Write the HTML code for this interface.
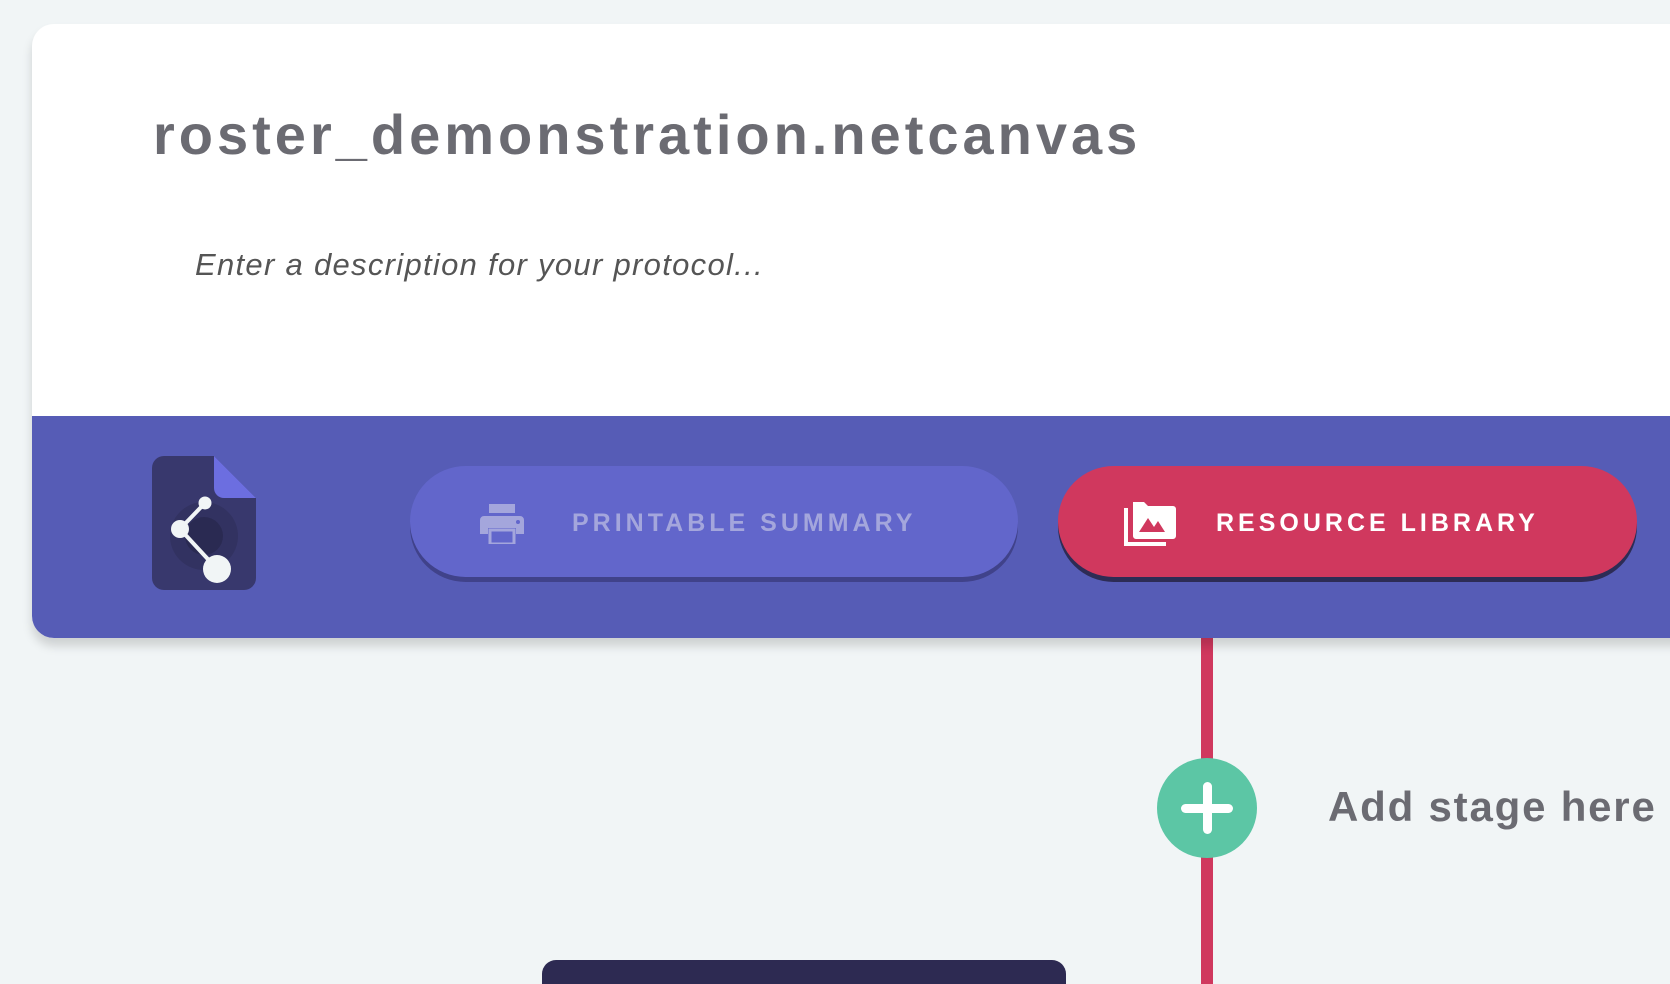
<!DOCTYPE html>
<html><head><style>
*{margin:0;padding:0;box-sizing:border-box}
html,body{width:1670px;height:984px;overflow:hidden}
body{background:#f1f5f6;font-family:"Liberation Sans",sans-serif;position:relative}
.line{position:absolute;left:1201px;top:600px;width:12px;height:384px;background:#d0385e}
.card{position:absolute;left:32px;top:24px;width:1700px;height:614px;border-radius:22px;overflow:hidden;background:#fff;box-shadow:0 8px 10px rgba(0,0,0,.15)}
.title{position:absolute;left:121px;top:78px;font-size:56px;font-weight:bold;color:#6b6b72;letter-spacing:4px}
.desc{position:absolute;left:163px;top:223px;font-size:31px;font-style:italic;color:#555;letter-spacing:1.3px}
.bar{position:absolute;left:0;top:392px;width:100%;height:222px;background:#565cb6}
.btn{position:absolute;height:111px;border-radius:56px;display:flex;align-items:center;font-weight:bold;font-size:25px;letter-spacing:4px;padding-top:4px}
.b1{left:378px;top:50px;width:608px;background:#6266cb;color:#a4a6dc;box-shadow:0 5px 0 #40428a}
.b2{left:1026px;top:50px;width:579px;background:#d0385e;color:#fff;box-shadow:0 5px 0 #2d2c55}
.plus{position:absolute;left:1157px;top:758px;width:100px;height:100px;border-radius:50%;background:#5cc6a5}
.add{position:absolute;left:1328px;top:783px;font-size:42px;font-weight:bold;color:#6b6b72;letter-spacing:1.8px}
.dark{position:absolute;left:542px;top:960px;width:524px;height:60px;border-radius:14px;background:#2d2a52}
</style></head><body>
<div class="line"></div>
<div class="card">
<div class="title">roster_demonstration.netcanvas</div>
<div class="desc">Enter a description for your protocol...</div>
<div class="bar">
<svg style="position:absolute;left:120px;top:40px" width="104" height="134" viewBox="0 0 104 134">
<path d="M12 0H62L104 42V122A12 12 0 0 1 92 134H12A12 12 0 0 1 0 122V12A12 12 0 0 1 12 0Z" fill="#38386d"/>
<path d="M62 0L104 42H72A10 10 0 0 1 62 32Z" fill="#6c6ee0"/>
<circle cx="52" cy="80" r="34" fill="#323261"/>
<circle cx="52" cy="80" r="19" fill="#2a2a52"/>
<path d="M53 47L28 73L65 113" stroke="#f1f5f6" stroke-width="4" fill="none"/>
<circle cx="53" cy="47" r="6.5" fill="#f1f5f6"/>
<circle cx="28" cy="73" r="9" fill="#f1f5f6"/>
<circle cx="65" cy="113" r="14" fill="#f1f5f6"/>
</svg>
<div class="btn b1"><svg style="margin-left:70px;margin-right:48px" width="44" height="40" viewBox="0 0 44 40"><rect x="9" y="0" width="26" height="9" fill="#a4a6dc"/><path d="M4 12H40A4 4 0 0 1 44 16V30H36V24H8V30H0V16A4 4 0 0 1 4 12Z" fill="#a4a6dc"/><rect x="10" y="26" width="24" height="14" fill="none" stroke="#a4a6dc" stroke-width="3"/><circle cx="38" cy="18" r="2" fill="#6266cb"/></svg>PRINTABLE SUMMARY</div>
<div class="btn b2"><svg style="margin-left:66px;margin-right:40px" width="52" height="44" viewBox="0 0 52 44"><path d="M0 6V44H42V40H4V6Z" fill="#fff"/><path d="M9 0H20L24 4H49A3 3 0 0 1 52 7V34A3 3 0 0 1 49 37H12A3 3 0 0 1 9 34Z" fill="#fff"/><path d="M15 30L24 16L30 25L34 19L41 30Z" fill="#d0385e"/></svg>RESOURCE LIBRARY</div>
</div>
</div>
<div class="plus"><div style="position:absolute;left:24px;top:46px;width:52px;height:9px;border-radius:5px;background:#fff"></div><div style="position:absolute;left:46px;top:24px;width:9px;height:52px;border-radius:5px;background:#fff"></div></div>
<div class="add">Add stage here</div>
<div class="dark"></div>
</body></html>
